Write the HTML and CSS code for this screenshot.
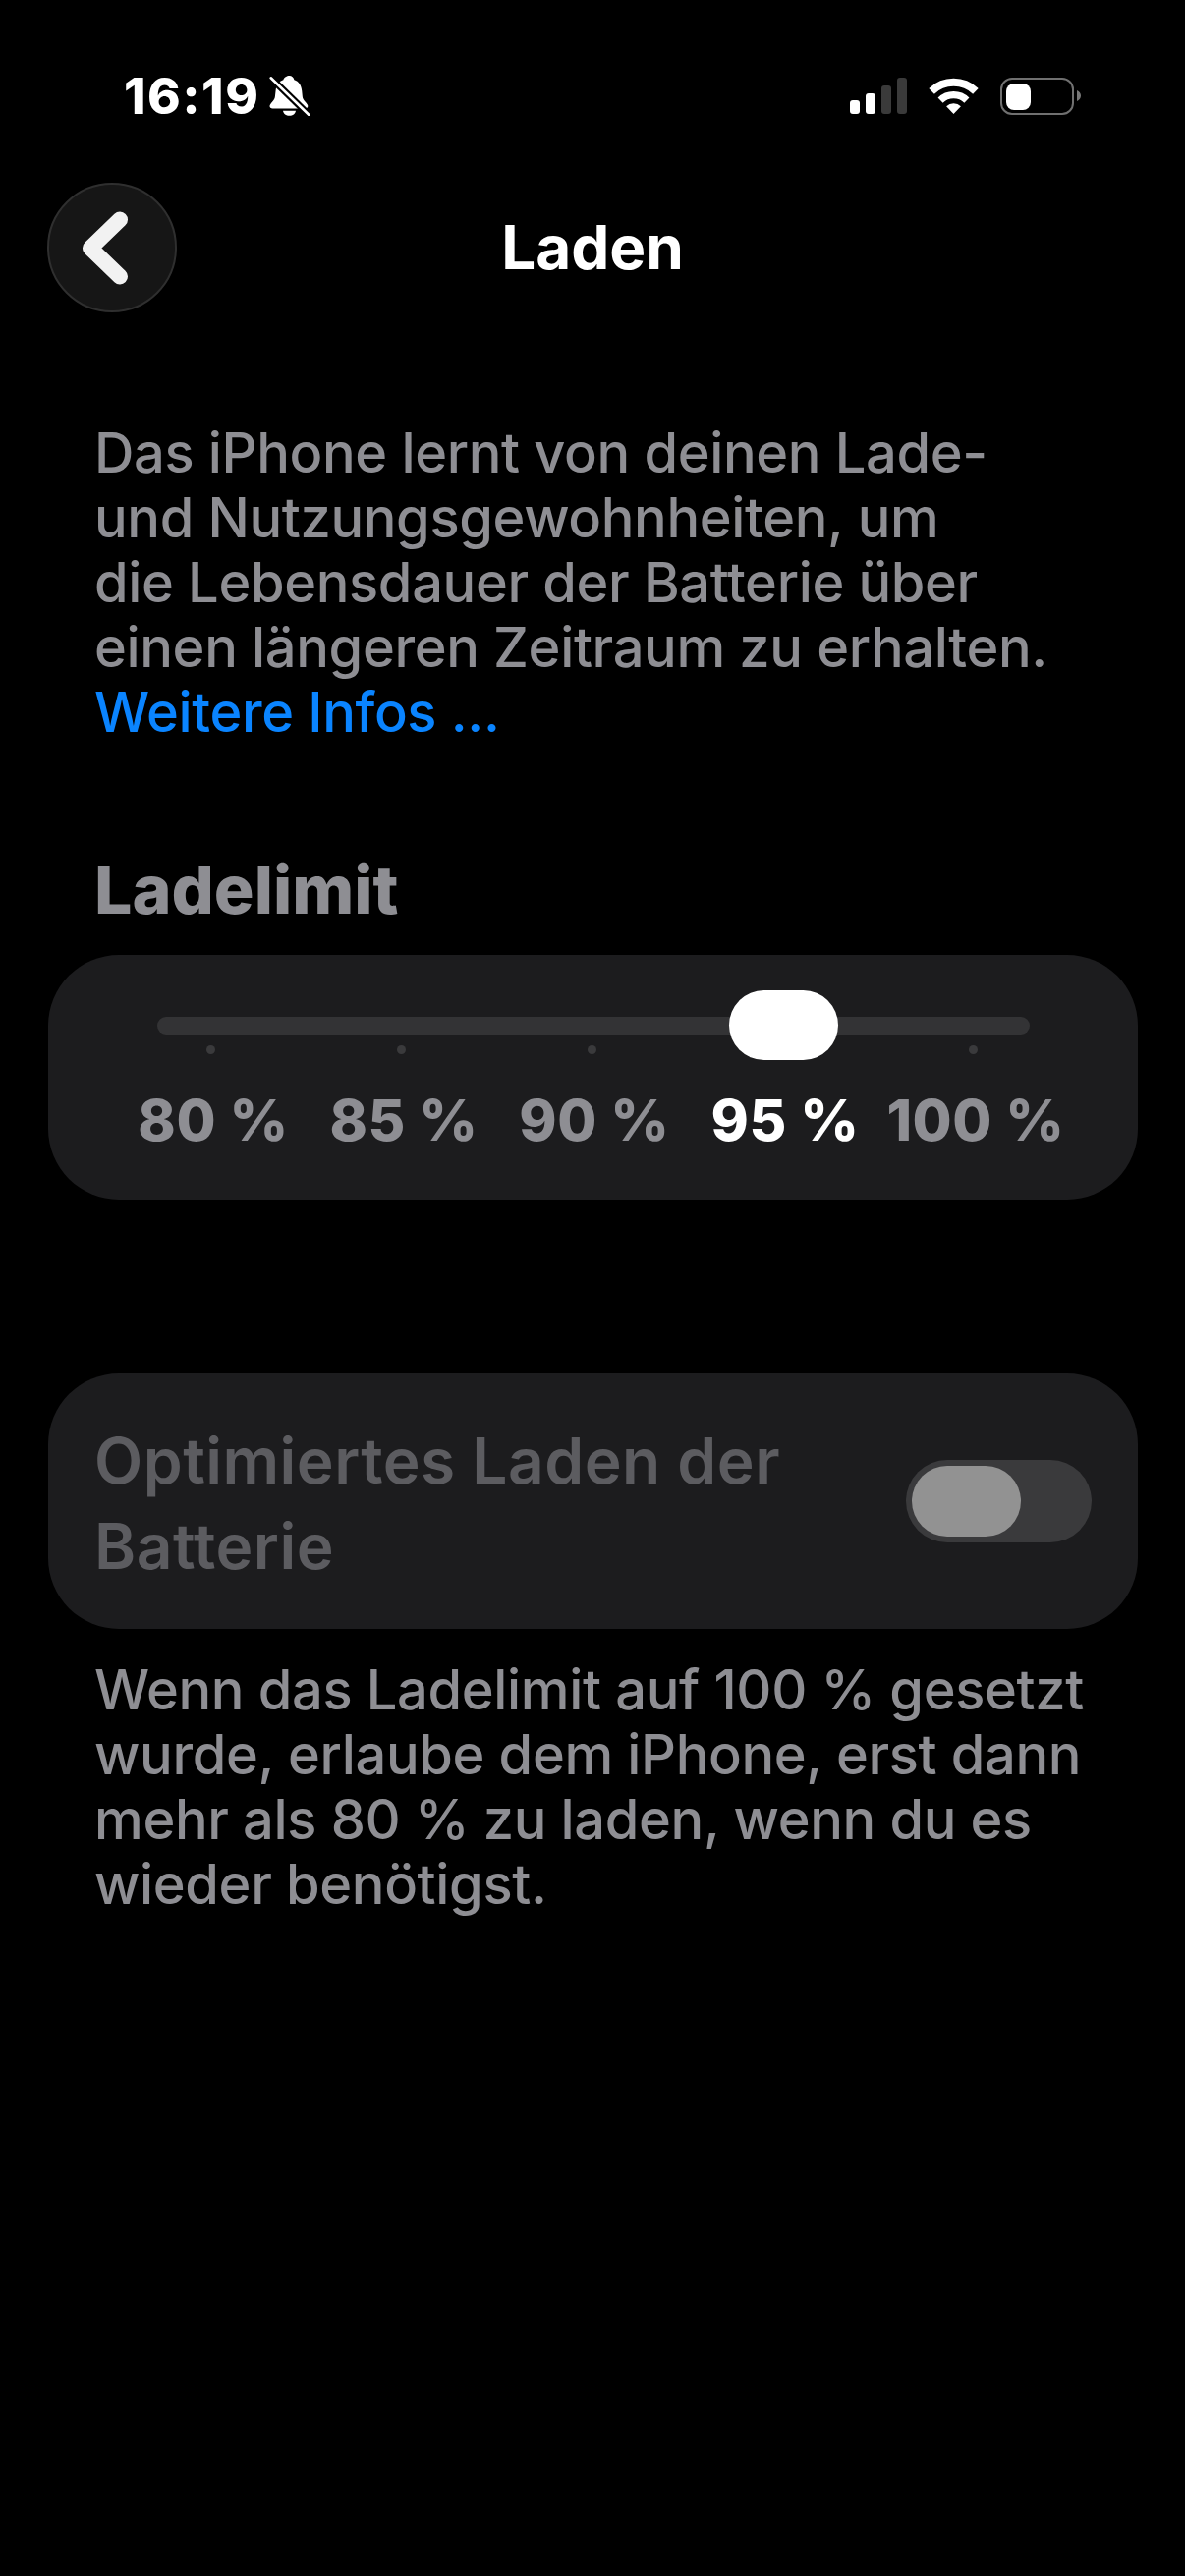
FILE: index.html
```html
<!DOCTYPE html>
<html lang="de">
<head>
    <meta charset="UTF-8">
    <meta name="viewport" content="width=device-width, initial-scale=1.0">
    <title>Laden</title>
    <link rel="stylesheet" href="styles.css">
</head>
<body>
    <div class="status-bar">
        <div class="status-left">
            <span class="time">16:19</span>
            <svg class="bell" width="42" height="41" viewBox="0 0 42 41">
                <path d="M20.500 0c2.500 0 4.300 1.700 4.900 4.200 4.700 1.600 7.200 5.500 7.800 11l.6 6c.2 2.300 1.200 3.600 2.700 5.200 1.600 1.700 2.800 3.300 2.800 4.600 0 1.500-1.200 2.400-3 2.400H3.500c-1.900 0-3-.9-3-2.400 0-1.400 1.200-3 2.700-4.600 1.500-1.600 2.500-2.900 2.700-5.200l.7-6c.6-5.500 3.100-9.400 7.800-11C15 1.700 18 0 20.500 0z" fill="#fff"/>
                <path d="M14 35.800h13c-.4 3-3.100 5-6.500 5s-6.100-2-6.500-5z" fill="#fff"/>
                <path d="M1.700 2.300L40.700 40.300" stroke="#000" stroke-width="7" fill="none"/>
                <path d="M1.700 2.300L40.700 40.300" stroke="#fff" stroke-width="2.600" stroke-linecap="round" fill="none"/>
            </svg>
        </div>
        <div class="status-right">
            <div class="signal">
                <span class="bar bar-1"></span>
                <span class="bar bar-2"></span>
                <span class="bar bar-3"></span>
                <span class="bar bar-4"></span>
            </div>
            <svg width="51" height="37" viewBox="0 0 51 37">
                <path d="M3.100 13.800A32.200 32.200 0 0 1 47.900 13.800" stroke="#fff" stroke-width="8" fill="none"/>
                <path d="M12.100 23.100A19.300 19.300 0 0 1 38.900 23.100" stroke="#fff" stroke-width="7.300" fill="none"/>
                <path d="M25.500 37L18.100 29.300A10.700 10.700 0 0 1 32.900 29.300Z" fill="#fff"/>
            </svg>
            <div class="battery">
                <div class="battery-body"><div class="battery-fill"></div></div>
                <svg class="battery-nub" width="4" height="11" viewBox="0 0 4 11"><path d="M0 0C2.500 1 4 3 4 5.500S2.500 10 0 11Z" fill="#777"/></svg>
            </div>
        </div>
    </div>

    <div class="nav">
        <button class="back-button">
            <svg width="60" height="80" viewBox="0 0 60 80">
                <path d="M38 11.500L8 40.500L38 69.500" stroke="#f2f2f2" stroke-width="16" stroke-linecap="round" stroke-linejoin="round" fill="none"/>
            </svg>
        </button>
        <div class="nav-title">Laden</div>
    </div>

    <p class="intro">
        Das iPhone lernt von deinen Lade-<br>
        und Nutzungsgewohnheiten, um<br>
        die Lebensdauer der Batterie über<br>
        einen längeren Zeitraum zu erhalten.<br>
        <a class="link" href="#">Weitere Infos ...</a>
    </p>

    <h2 class="section-title">Ladelimit</h2>
    <div class="card slider-card">
        <div class="track">
            <div class="thumb"></div>
        </div>
        <div class="ticks">
            <span class="tick"></span>
            <span class="tick"></span>
            <span class="tick"></span>
            <span class="tick tick-hidden"></span>
            <span class="tick"></span>
        </div>
        <div class="labels">
            <span>80 %</span>
            <span>85 %</span>
            <span>90 %</span>
            <span class="label-active">95 %</span>
            <span>100 %</span>
        </div>
    </div>

    <div class="card toggle-card">
        <div class="toggle-text">Optimiertes Laden der<br>Batterie</div>
        <div class="toggle">
            <div class="toggle-knob"></div>
        </div>
    </div>

    <p class="foot">
        Wenn das Ladelimit auf 100 % gesetzt<br>
        wurde, erlaube dem iPhone, erst dann<br>
        mehr als 80 % zu laden, wenn du es<br>
        wieder benötigst.
    </p>
</body>
</html>
```

FILE: styles.css
```css
html, body {
    margin: 0;
    background: #000;
}
body {
    height: 2622px;
    overflow: hidden;
    font-family: Inter, "Liberation Sans", sans-serif;
    color: #8e8e93;
}
.status-bar {
    display: flex;
    justify-content: space-between;
    align-items: center;
    height: 41px;
    padding: 77px 106px 0 126px;
}
.status-left {
    display: flex;
    align-items: center;
    gap: 9px;
}
.time {
    font-size: 51px;
    line-height: 41px;
    font-weight: 800;
    letter-spacing: 1.6px;
    color: #fff;
}
.bell {
    display: block;
}
.status-right {
    display: flex;
    align-items: center;
}
.signal {
    display: flex;
    align-items: flex-end;
    gap: 6px;
    height: 37px;
    margin-right: 22px;
}
.bar {
    width: 10px;
    border-radius: 3px;
    background: #fff;
}
.bar-1 { height: 14px; }
.bar-2 { height: 21px; }
.bar-3 { height: 29px; background: #3a3a3a; }
.bar-4 { height: 37px; background: #3a3a3a; }
.battery {
    display: flex;
    align-items: center;
    margin-left: 22px;
}
.battery-body {
    box-sizing: border-box;
    width: 75px;
    height: 38px;
    padding: 4px;
    border: 2.500px solid #707070;
    border-radius: 12px;
}
.battery-fill {
    width: 25px;
    height: 27px;
    border-radius: 8px;
    background: #fff;
}
.battery-nub {
    display: block;
    margin-left: 3px;
}
.nav {
    display: grid;
    grid-template-columns: 132px 1fr 132px;
    align-items: center;
    height: 132px;
    margin-top: 68px;
    padding: 0 48px;
}
.back-button {
    box-sizing: border-box;
    display: flex;
    align-items: center;
    justify-content: center;
    width: 132px;
    height: 132px;
    padding: 0;
    background: #161616;
    border: 2px solid #2f2f2f;
    border-radius: 50%;
}
.nav-title {
    font-size: 62px;
    line-height: 80px;
    font-weight: 700;
    color: #fff;
    text-align: center;
}
.intro {
    margin: 110px 0 0;
    padding: 0 96px;
    font-size: 56px;
    line-height: 66px;
    font-weight: 500;
    letter-spacing: -0.36px;
}
.link {
    color: #0a84ff;
    text-decoration: none;
}
.section-title {
    margin: 107px 0 27px;
    padding: 0 96px;
    font-size: 68px;
    line-height: 80px;
    font-weight: 800;
}
.card {
    box-sizing: border-box;
    margin: 0 48px 0 49px;
    background: #1c1c1e;
    border-radius: 72px;
}
.slider-card {
    height: 249px;
    padding-top: 63px;
}
.track {
    position: relative;
    height: 18px;
    margin: 0 110px 0 111px;
    border-radius: 9px;
    background: #333335;
}
.thumb {
    position: absolute;
    left: 582px;
    top: -27px;
    width: 111px;
    height: 71px;
    border-radius: 36px;
    background: #fff;
}
.ticks,
.labels {
    display: grid;
    grid-template-columns: repeat(5, 194px);
}
.ticks {
    margin-top: 11px;
    margin-left: 68px;
    justify-items: center;
}
.tick {
    width: 9px;
    height: 9px;
    border-radius: 50%;
    background: #3a3a3c;
}
.tick-hidden {
    visibility: hidden;
}
.labels {
    margin-top: 33px;
    margin-left: 71px;
    font-size: 58px;
    line-height: 68px;
    font-weight: 800;
    letter-spacing: 0.6px;
    text-align: center;
}
.label-active {
    color: #fff;
}
.toggle-card {
    display: flex;
    align-items: center;
    justify-content: space-between;
    height: 260px;
    margin-top: 177px;
    padding: 4px 47px 0 47px;
}
.toggle-text {
    font-size: 64px;
    line-height: 87px;
    font-weight: 600;
    letter-spacing: 0.5px;
    color: #5c5c60;
}
.toggle {
    box-sizing: border-box;
    width: 189px;
    height: 84px;
    margin-top: -4px;
    padding: 6px;
    border-radius: 42px;
    background: #3a3a3c;
}
.toggle-knob {
    width: 111px;
    height: 72px;
    border-radius: 36px;
    background: #929292;
}
.foot {
    margin: 29px 0 0;
    padding: 0 96px;
    font-size: 56px;
    line-height: 66px;
    font-weight: 500;
    letter-spacing: -0.36px;
}
```
